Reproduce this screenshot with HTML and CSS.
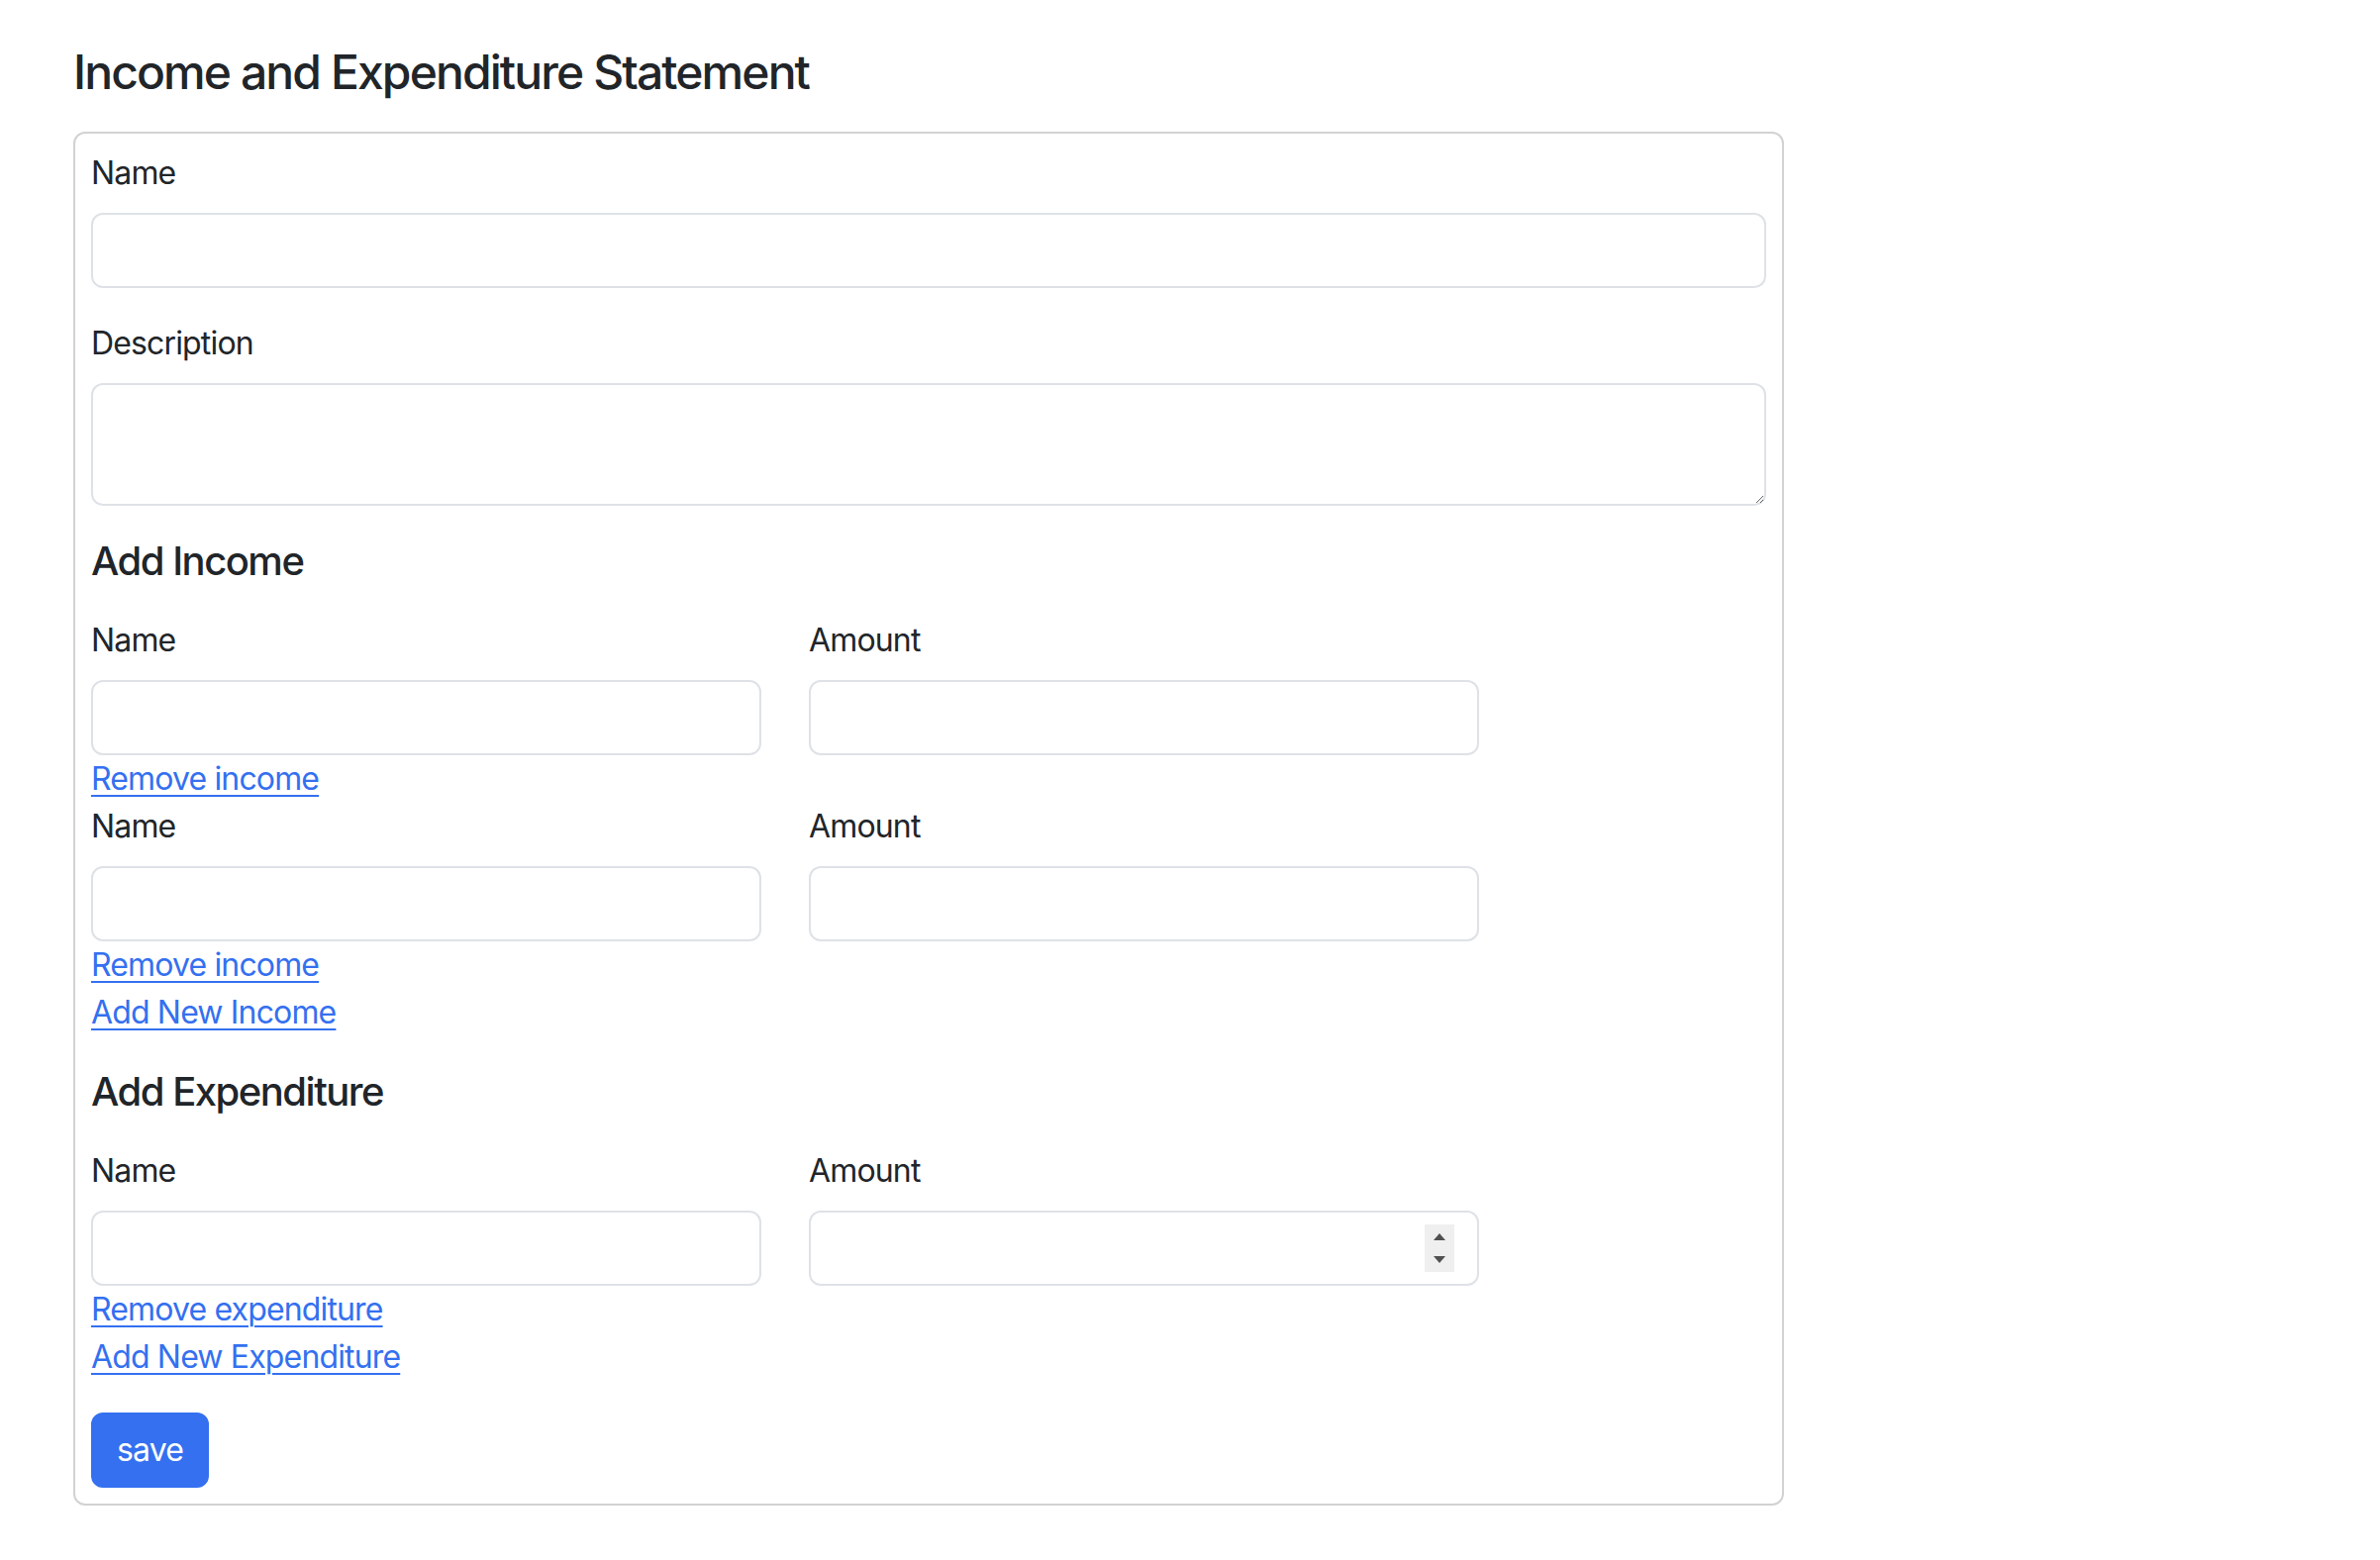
FILE: index.html
```html
<!DOCTYPE html>
<html lang="en">
<head>
<meta charset="utf-8">
<title>Income and Expenditure Statement</title>
<link rel="stylesheet" href="styles.css">
</head>
<body>
<main class="page">
  <h1 class="title">Income and Expenditure Statement</h1>
  <form class="card">
    <div class="field">
      <label class="label">Name</label>
      <input class="control" type="text">
    </div>
    <div class="field">
      <label class="label">Description</label>
      <textarea class="control textarea" rows="2"></textarea>
    </div>

    <section class="group">
      <h2 class="section-title">Add Income</h2>
      <div class="entry">
        <div class="row">
          <div class="col"><label class="label">Name</label><input class="control" type="text"></div>
          <div class="col"><label class="label">Amount</label><input class="control" type="text"></div>
        </div>
        <div class="line"><a href="#" class="link">Remove income</a></div>
      </div>
      <div class="entry">
        <div class="row">
          <div class="col"><label class="label">Name</label><input class="control" type="text"></div>
          <div class="col"><label class="label">Amount</label><input class="control" type="text"></div>
        </div>
        <div class="line"><a href="#" class="link">Remove income</a></div>
      </div>
      <div class="line"><a href="#" class="link">Add New Income</a></div>
    </section>

    <section class="group">
      <h2 class="section-title">Add Expenditure</h2>
      <div class="entry">
        <div class="row">
          <div class="col"><label class="label">Name</label><input class="control" type="text"></div>
          <div class="col">
            <label class="label">Amount</label>
            <div class="number-wrap">
              <input class="control" type="text">
              <span class="spinner" aria-hidden="true">
                <svg width="30" height="48" viewBox="0 0 30 48">
                  <path d="M9 16 L15 9 L21 16 Z" fill="#505050"/>
                  <path d="M9 32 L21 32 L15 39 Z" fill="#505050"/>
                </svg>
              </span>
            </div>
          </div>
        </div>
        <div class="line"><a href="#" class="link">Remove expenditure</a></div>
      </div>
      <div class="line"><a href="#" class="link">Add New Expenditure</a></div>
    </section>

    <button type="button" class="btn">save</button>
  </form>
</main>
</body>
</html>
```

FILE: styles.css
```css
* { box-sizing: border-box; }

html, body {
  margin: 0;
  padding: 0;
  background: #ffffff;
}

body {
  font-family: Inter, "Noto Sans", "Liberation Sans", sans-serif;
  font-size: 32px;
  line-height: 48px;
  letter-spacing: -0.85px;
  color: #212529;
}

.page {
  padding: 44px 0 40px 74px;
}

.title {
  margin: 0 0 31px;
  font-size: 48px;
  line-height: 58px;
  font-weight: 500;
  letter-spacing: -1.9px;
  color: #212529;
}

.card {
  width: 1728px;
  border: 2px solid #d2d2d2;
  border-radius: 12px;
  padding: 16px;
  display: flex;
  flex-direction: column;
  align-items: stretch;
}

.field {
  display: flex;
  flex-direction: column;
  margin-bottom: 32px;
}

.label {
  display: block;
  margin-bottom: 16px;
  font-size: 32px;
  line-height: 48px;
}

.control {
  display: block;
  width: 100%;
  height: 76px;
  border: 2px solid #dee2e6;
  border-radius: 12px;
  padding: 12px 24px;
  font: inherit;
  color: #212529;
  background: #ffffff;
  outline: none;
}

.textarea {
  height: 124px;
  resize: vertical;
}

.group {
  margin-bottom: 32px;
}

.section-title {
  margin: 0 0 32px;
  font-size: 40px;
  line-height: 48px;
  font-weight: 500;
  letter-spacing: -1.5px;
  color: #212529;
}

.row {
  display: flex;
  margin: 0 -24px;
}

.col {
  flex: 0 0 41.6667%;
  padding: 0 24px;
}

.line {
  height: 48px;
}

.link {
  color: #3470f0;
  text-decoration: underline;
  text-decoration-thickness: 2px;
  text-underline-offset: 5px;
}

.number-wrap {
  position: relative;
}

.spinner {
  position: absolute;
  right: 25px;
  top: 14px;
  width: 30px;
  height: 48px;
  background: #efefef;
  display: block;
}

.spinner svg {
  display: block;
}

.btn {
  align-self: flex-start;
  height: 76px;
  padding: 12px 24px;
  border: 2px solid #3470f0;
  border-radius: 12px;
  background: #3470f0;
  color: #ffffff;
  font: inherit;
  font-size: 32px;
  line-height: 48px;
  letter-spacing: -0.85px;
  cursor: pointer;
}
```
